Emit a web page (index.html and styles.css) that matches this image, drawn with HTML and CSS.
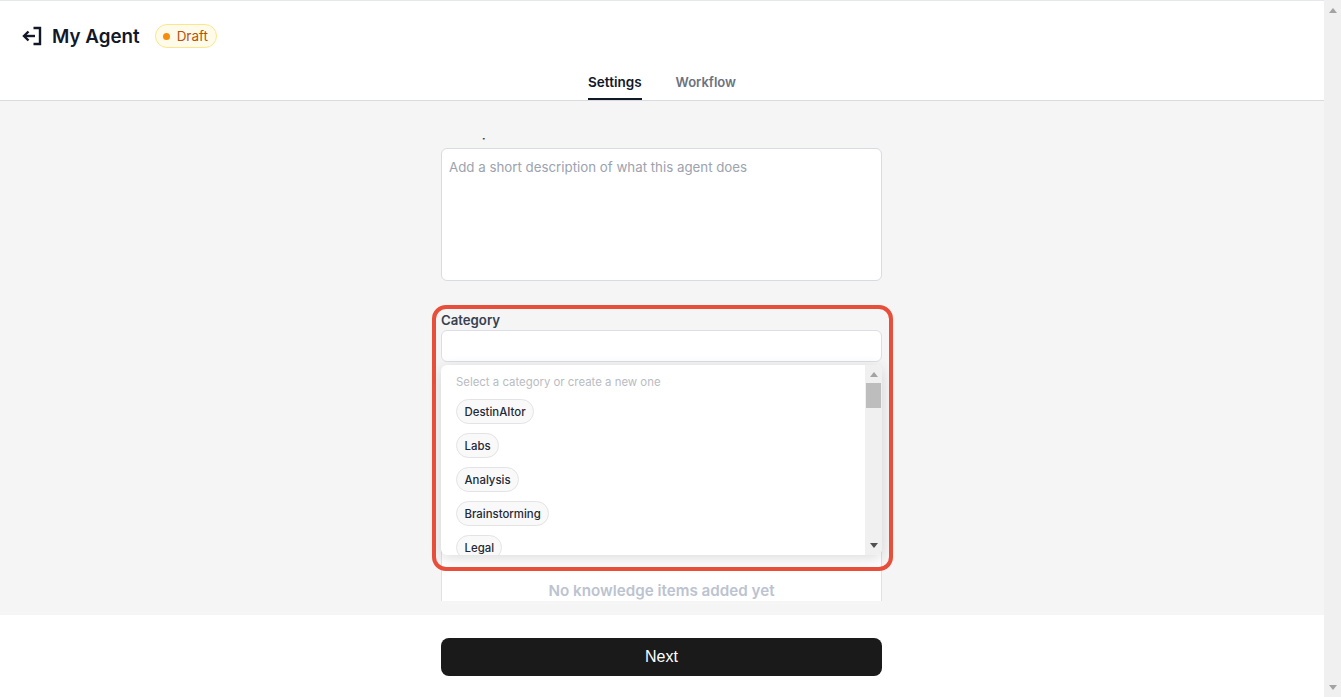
FILE: index.html
```html
<!DOCTYPE html>
<html lang="en">
<head>
    <meta charset="UTF-8">
    <title>My Agent</title>
    <link rel="stylesheet" href="styles.css">
</head>
<body>
    <div class="app">
        <div class="main">
            <div class="topbar">
                <div class="title-row">
                    <svg class="back-icon" width="20" height="20" viewBox="0 0 20 20" fill="none" stroke="#111827" stroke-width="2.4">
                        <path d="M11.5 2H18V18H11.5"/>
                        <path d="M13 10H2"/>
                        <path d="M6.5 5.5L2 10L6.5 14.5"/>
                    </svg>
                    <h1>My Agent</h1>
                    <span class="badge"><i class="badge-dot"></i>Draft</span>
                </div>
                <div class="tabs">
                    <div class="tab active">Settings</div>
                    <div class="tab">Workflow</div>
                </div>
            </div>

            <div class="content">
                <div class="form-scroll">
                    <div class="form">
                        <label class="label">Description</label>
                        <div class="textarea">Add a short description of what this agent does</div>

                        <div class="category">
                            <label class="label">Category</label>
                            <div class="input"></div>
                            <div class="dropdown">
                                <div class="dropdown-list">
                                    <div class="hint">Select a category or create a new one</div>
                                    <span class="chip">DestinAItor</span>
                                    <span class="chip">Labs</span>
                                    <span class="chip">Analysis</span>
                                    <span class="chip">Brainstorming</span>
                                    <span class="chip">Legal</span>
                                </div>
                                <div class="bar bar-inner">
                                    <i class="arrow up"></i>
                                    <i class="thumb"></i>
                                    <i class="arrow down dark"></i>
                                </div>
                            </div>
                        </div>

                        <div class="knowledge">No knowledge items added yet</div>
                    </div>
                </div>
                <div class="highlight"></div>
            </div>

            <div class="footer">
                <button class="next" type="button">Next</button>
            </div>
        </div>
        <div class="bar bar-page">
            <i class="arrow up"></i>
            <i class="arrow down"></i>
        </div>
    </div>
</body>
</html>
```

FILE: styles.css
```css
* {
    box-sizing: border-box;
}

html, body {
    height: 100%;
}

body {
    margin: 0;
    font-family: Inter, 'Noto Sans', sans-serif;
    background-color: #fff;
    overflow: hidden;
}

.app {
    display: flex;
    height: 697px;
}

.main {
    flex: 1;
    min-width: 0;
    display: flex;
    flex-direction: column;
}

/* Header */
.topbar {
    height: 101px;
    flex-shrink: 0;
    background-color: #fff;
    border-top: 1px solid #e5e7eb;
    border-bottom: 1px solid #d9dbe0;
    display: flex;
    flex-direction: column;
}

.title-row {
    display: flex;
    align-items: center;
    height: 70px;
    padding-left: 23px;
}

.back-icon {
    margin-right: 10px;
    margin-left: -1px;
}

.title-row h1 {
    margin: 0;
    font-size: 18.8px;
    font-weight: 600;
    color: #111827;
}

.badge {
    display: flex;
    align-items: center;
    gap: 7px;
    height: 24px;
    margin-left: 15px;
    padding: 0 8px 0 7px;
    font-size: 13.5px;
    color: #b45309;
    background-color: #fffbeb;
    border: 1px solid #fde68a;
    border-radius: 12px;
}

.badge-dot {
    width: 7px;
    height: 7px;
    border-radius: 50%;
    background-color: #f78c0a;
}

.tabs {
    display: flex;
    justify-content: center;
    gap: 34px;
}

.tab {
    height: 29px;
    font-size: 13px;
    font-weight: 600;
    line-height: 23px;
    color: #6b7280;
}

.tab.active {
    font-size: 13.5px;
    color: #111827;
    border-bottom: 2px solid #111827;
}

/* Form area */
.content {
    position: relative;
    flex: 1;
    min-height: 0;
    background-color: #f5f5f5;
    padding: 37px 1px 0 0;
}

.form-scroll {
    width: 481px;
    height: 463px;
    margin: 0 auto;
    padding: 0 20px;
    overflow: hidden;
}

.form {
    margin-top: -16px;
}

.label {
    display: block;
    font-size: 13.2px;
    font-weight: 600;
    line-height: 20px;
    color: #374151;
}

.textarea {
    height: 133px;
    margin-top: 6px;
    padding: 9px 7px;
    font-size: 13.3px;
    line-height: 18px;
    color: #9ca3af;
    background-color: #fff;
    border: 1px solid #d9dbe3;
    border-radius: 6px;
}

.category {
    position: relative;
    margin-top: 29px;
}

.input {
    height: 32px;
    background-color: #fff;
    border: 1px solid #dcdde6;
    border-radius: 6px;
}

.dropdown {
    position: absolute;
    top: 55px;
    left: 0;
    right: 0;
    height: 190px;
    display: flex;
    background-color: #fff;
    border-radius: 6px;
    box-shadow: 0 3px 14px rgba(0, 0, 0, 0.14);
    z-index: 2;
    overflow: hidden;
}

.dropdown-list {
    flex: 1;
    min-width: 0;
    overflow: hidden;
    padding: 10px 15px;
}

.hint {
    font-size: 11.4px;
    line-height: 14px;
    color: #b9bcc2;
    margin-bottom: 10px;
}

.chip {
    display: flex;
    align-items: center;
    width: fit-content;
    height: 25px;
    margin-bottom: 9px;
    padding: 1px 7px 0 7.5px;
    font-size: 11.4px;
    font-weight: 500;
    color: #1f2937;
    background-color: #f9f9f9;
    border: 1px solid #e3e3e6;
    border-radius: 13px;
}

/* Scrollbars */
.bar {
    flex-shrink: 0;
    width: 17px;
    display: flex;
    flex-direction: column;
    align-items: center;
    background-color: #f0f0f0;
}

.bar-page {
    justify-content: space-between;
    padding: 8px 0 7px;
}

.bar-inner {
    padding-top: 7px;
}

.arrow {
    width: 0;
    height: 0;
    border-left: 4px solid transparent;
    border-right: 4px solid transparent;
}

.arrow.up {
    border-bottom: 5px solid #a3a3a3;
}

.arrow.down {
    border-top: 5px solid #a3a3a3;
}

.arrow.dark {
    border-top-color: #505050;
    margin-top: 135px;
}

.thumb {
    width: 15px;
    height: 25px;
    margin-top: 6px;
    background-color: #bdbdbd;
}

.knowledge {
    height: 160px;
    margin-top: 178px;
    padding-top: 40px;
    text-align: center;
    font-size: 15.2px;
    font-weight: 600;
    color: #bcc3d0;
    background-color: #fff;
    border: 1px solid #dbe2ee;
    border-radius: 6px;
}

.highlight {
    position: absolute;
    top: 204px;
    left: 432px;
    width: 461px;
    height: 266px;
    border: 4px solid #e84f3a;
    border-radius: 14px;
    z-index: 3;
}

/* Footer */
.footer {
    height: 82px;
    flex-shrink: 0;
    display: flex;
    justify-content: center;
    padding: 23px 1px 0 0;
    background-color: #fff;
}

.next {
    width: 441px;
    height: 38px;
    font-family: 'Liberation Sans', Arial, sans-serif;
    font-size: 16px;
    color: #fff;
    background-color: #1a1a1a;
    border: none;
    border-radius: 8px;
    cursor: pointer;
}
```
